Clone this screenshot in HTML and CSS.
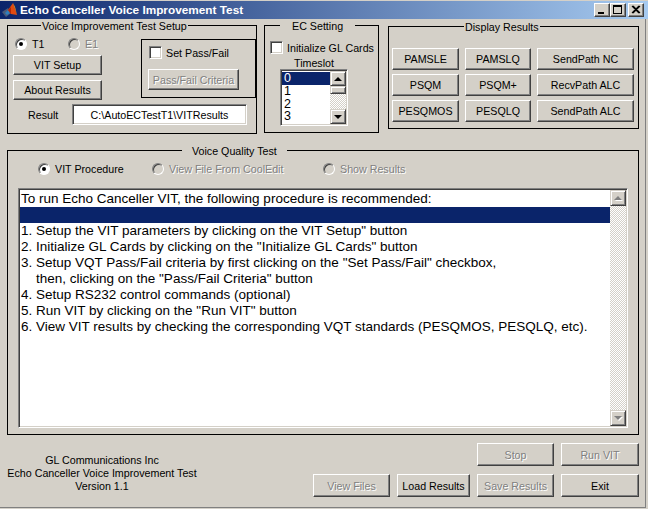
FILE: index.html
```html
<!DOCTYPE html>
<html>
<head>
<meta charset="utf-8">
<title>Echo Canceller Voice Improvement Test</title>
<link rel="stylesheet" href="styles.css">
</head>
<body>
<div class="window">
  <div class="titlebar">
    <svg class="app-icon" viewBox="0 0 16 16" width="16" height="16">
      <polygon points="0,10 6,6 9,11 4,15" fill="#4a5a7a"/>
      <polygon points="3,11 6,8 8,11 5,13" fill="#2e7fbf"/>
      <polygon points="6,8 11,1 15,13 9,12" fill="#e04a10"/>
      <polygon points="11,1 13,5 15,13" fill="#f6b820"/>
      <polygon points="6,8 9,5 9,12" fill="#b02808"/>
    </svg>
    <span class="title">Echo Canceller Voice Improvement Test</span>
    <div class="caption-buttons">
      <span class="cap-btn"><svg viewBox="0 0 14 12" width="14" height="12"><rect x="3" y="8" width="6" height="2" fill="#000"/></svg></span>
      <span class="cap-btn"><svg viewBox="0 0 14 12" width="14" height="12"><rect x="2.5" y="1.5" width="8" height="8" fill="none" stroke="#000"/><rect x="2" y="1" width="9" height="2" fill="#000"/></svg></span>
      <span class="cap-btn close"><svg viewBox="0 0 14 12" width="14" height="12"><path d="M3 2 L10 9 M4 2 L11 9 M10 2 L3 9 M11 2 L4 9" stroke="#000" stroke-width="1.1"/></svg></span>
    </div>
  </div>

  <div class="client">
    <div class="top-row">
      <fieldset class="panel setup">
        <legend class="lg-setup">Voice Improvement Test Setup</legend>
        <div class="setup-top">
          <div class="setup-left">
            <div class="radio-row">
              <span class="radio-item t1"><span class="radio checked"></span><span>T1</span></span>
              <span class="radio-item"><span class="radio off"></span><span class="dis-text">E1</span></span>
            </div>
            <button class="btn setup-btn">VIT Setup</button>
            <button class="btn setup-btn gap5">About Results</button>
          </div>
          <div class="passfail-box">
            <div class="check-row"><span class="checkbox"></span><span class="check-text">Set Pass/Fail</span></div>
            <button class="btn disabled pf-btn">Pass/Fail Criteria</button>
          </div>
        </div>
        <div class="result-row">
          <span class="result-label">Result</span>
          <div class="field">C:\AutoECTestT1\VITResults</div>
        </div>
      </fieldset>

      <fieldset class="panel ec">
        <legend class="lg-ec">EC Setting</legend>
        <div class="ec-check"><span class="checkbox"></span><span class="check-text">Initialize GL Cards</span></div>
        <div class="timeslot-label">Timeslot</div>
        <div class="listbox small-list">
          <div class="items">
            <div class="item sel">0</div>
            <div class="item">1</div>
            <div class="item">2</div>
            <div class="item">3</div>
          </div>
          <div class="scrollbar">
            <span class="sb-btn"><span class="arrow up"></span></span>
            <span class="sb-thumb"></span>
            <span class="sb-track"></span>
            <span class="sb-btn"><span class="arrow down"></span></span>
          </div>
        </div>
      </fieldset>

      <fieldset class="panel display">
        <legend class="lg-display">Display Results</legend>
        <div class="display-grid">
          <button class="btn">PAMSLE</button>
          <button class="btn">PAMSLQ</button>
          <button class="btn">SendPath NC</button>
          <button class="btn">PSQM</button>
          <button class="btn">PSQM+</button>
          <button class="btn">RecvPath ALC</button>
          <button class="btn">PESQMOS</button>
          <button class="btn">PESQLQ</button>
          <button class="btn">SendPath ALC</button>
        </div>
      </fieldset>
    </div>

    <fieldset class="panel vqt">
      <legend class="lg-vqt">Voice Quality Test</legend>
      <div class="vqt-radios">
        <span class="radio-item w1"><span class="radio checked"></span><span>VIT Procedure</span></span>
        <span class="radio-item w2"><span class="radio off"></span><span class="dis-text">View File From CoolEdit</span></span>
        <span class="radio-item"><span class="radio off"></span><span class="dis-text">Show Results</span></span>
      </div>
      <div class="listbox big-list">
        <div class="lines">
          <div class="line">To run Echo Canceller VIT, the following procedure is recommended:</div>
          <div class="line sel"> </div>
          <div class="line">1. Setup the VIT parameters by clicking on the VIT Setup" button</div>
          <div class="line">2. Initialize GL Cards by clicking on the "Initialize GL Cards" button</div>
          <div class="line">3. Setup VQT Pass/Fail criteria by first clicking on the "Set Pass/Fail" checkbox,</div>
          <div class="line">    then, clicking on the "Pass/Fail Criteria" button</div>
          <div class="line">4. Setup RS232 control commands (optional)</div>
          <div class="line">5. Run VIT by clicking on the "Run VIT" button</div>
          <div class="line">6. View VIT results by checking the corresponding VQT standards (PESQMOS, PESQLQ, etc).</div>
        </div>
        <div class="scrollbar big-sb">
          <span class="sb-btn"><span class="arrow up dis"></span></span>
          <span class="sb-track"></span>
          <span class="sb-btn"><span class="arrow down dis"></span></span>
        </div>
      </div>
    </fieldset>

    <div class="bottom">
      <div class="company">
        <div>GL Communications Inc</div>
        <div>Echo Canceller Voice Improvement Test</div>
        <div>Version 1.1</div>
      </div>
      <div class="bottom-buttons">
        <button class="btn disabled c3">Stop</button>
        <button class="btn disabled c4">Run VIT</button>
        <button class="btn disabled">View Files</button>
        <button class="btn">Load Results</button>
        <button class="btn disabled">Save Results</button>
        <button class="btn">Exit</button>
      </div>
    </div>
  </div>
</div>
</body>
</html>
```

FILE: styles.css
```css
* { box-sizing: border-box; }
html, body { margin: 0; padding: 0; }
body {
  width: 648px;
  height: 509px;
  overflow: hidden;
  background: #D4D0C8;
  font-family: "Liberation Sans", Arial, sans-serif;
  font-size: 10.7px;
  color: #000;
}
.window { width: 648px; height: 509px; background: #D4D0C8; }

/* title bar */
.titlebar {
  margin-top: 1px;
  height: 18px;
  background: linear-gradient(to right, #0A246A, #A6CAF0);
  display: flex;
  align-items: center;
  padding-left: 2px;
}
.app-icon { flex: none; }
.title {
  flex: 1;
  margin-left: 2px;
  color: #fff;
  font-weight: bold;
  font-size: 11.8px;
  white-space: nowrap;
}
.caption-buttons { display: flex; margin-right: 4px; }
.cap-btn {
  width: 16px;
  height: 14px;
  background: #D4D0C8;
  border: 1px solid;
  border-color: #fff #404040 #404040 #fff;
  box-shadow: inset -1px -1px #808080;
  display: flex;
  align-items: center;
  justify-content: center;
}
.cap-btn svg { display: block; }
.cap-btn.close { margin-left: 2px; }

/* client */
.client {
  width: 646px;
  height: 489px;
  padding-left: 7px;
  border-right: 1px solid #808080;
  border-bottom: 1px solid #808080;
}
.top-row { display: flex; align-items: flex-start; }

.panel {
  margin: 0;
  padding: 0;
  border: 1px solid #000;
  min-width: 0;
}
.panel > legend {
  padding: 2px 1px 0;
  line-height: 11px;
  font-size: 10.7px;
  white-space: nowrap;
}

/* generic controls */
.btn {
  font: inherit;
  color: #000;
  background: #D4D0C8;
  border: 1px solid;
  border-color: #fff #404040 #404040 #fff;
  box-shadow: inset -1px -1px #808080;
  padding: 0;
  margin: 0;
  display: flex;
  align-items: center;
  justify-content: center;
  white-space: nowrap;
}
.btn.disabled, .dis-text { color: #808080; text-shadow: 1px 1px 0 #fff; }

.radio-item { display: flex; align-items: center; white-space: nowrap; }
.radio {
  width: 12px;
  height: 12px;
  border-radius: 50%;
  background: #fff;
  border: 1px solid;
  border-color: #808080 #fff #fff #808080;
  box-shadow: inset 1px 1px #404040;
  margin-right: 5px;
  flex: none;
  display: flex;
  align-items: center;
  justify-content: center;
}
.radio.off { background: #D4D0C8; }
.radio.checked::after {
  content: "";
  width: 4px;
  height: 4px;
  border-radius: 50%;
  background: #000;
}
.checkbox {
  width: 13px;
  height: 13px;
  background: #fff;
  border: 1px solid;
  border-color: #808080 #fff #fff #808080;
  box-shadow: inset 1px 1px #404040, inset -1px -1px #D4D0C8;
  flex: none;
}
.check-text { margin-left: 4px; white-space: nowrap; }

.listbox {
  background: #fff;
  border: 1px solid;
  border-color: #808080 #fff #fff #808080;
  box-shadow: inset 1px 1px #404040, inset -1px -1px #D4D0C8;
  padding: 1px;
  display: flex;
}
.scrollbar { width: 16px; flex: none; display: flex; flex-direction: column; }
.sb-btn {
  height: 15px;
  flex: none;
  background: #D4D0C8;
  border: 1px solid;
  border-color: #D4D0C8 #404040 #404040 #D4D0C8;
  box-shadow: inset 1px 1px #fff, inset -1px -1px #808080;
  display: flex;
  align-items: center;
  justify-content: center;
}
.sb-thumb {
  height: 8px;
  flex: none;
  background: #D4D0C8;
  border: 1px solid;
  border-color: #D4D0C8 #404040 #404040 #D4D0C8;
  box-shadow: inset 1px 1px #fff, inset -1px -1px #808080;
}
.sb-track {
  flex: 1;
  background-color: #fff;
  background-image: repeating-conic-gradient(#D4D0C8 0 25%, #fff 0 50%);
  background-size: 2px 2px;
}
.arrow { width: 0; height: 0; border-left: 4px solid transparent; border-right: 4px solid transparent; }
.arrow.up { border-bottom: 4px solid #000; }
.arrow.down { border-top: 4px solid #000; }
.arrow.up.dis { border-bottom-color: #808080; filter: drop-shadow(1px 1px 0 #fff); }
.arrow.down.dis { border-top-color: #808080; filter: drop-shadow(1px 1px 0 #fff); }

/* panel 1 */
.setup { width: 250px; padding-top: 1px; padding-bottom: 8px; }
.lg-setup { margin-left: 33px; }
.setup-top { display: flex; align-items: flex-start; }
.setup-left { margin-left: 5px; width: 89px; display: flex; flex-direction: column; }
.radio-row { height: 22px; display: flex; align-items: center; padding-left: 2px; }
.radio-item.t1 { width: 53px; }
.setup-btn { height: 20px; width: 89px; }
.gap5 { margin-top: 5px; }
.passfail-box {
  margin-left: 39px;
  margin-top: 6px;
  width: 115px;
  height: 59px;
  border: 1px solid #000;
}
.check-row { display: flex; align-items: center; margin: 6px 0 0 7px; }
.pf-btn { width: 91px; height: 21px; margin: 10px 0 0 6px; }
.result-row { display: flex; align-items: center; margin-top: 4px; height: 21px; }
.result-label { width: 64px; padding-left: 20px; }
.field {
  width: 175px;
  height: 21px;
  background: #fff;
  border: 1px solid;
  border-color: #808080 #fff #fff #808080;
  box-shadow: inset 1px 1px #404040, inset -1px -1px #D4D0C8;
  display: flex;
  align-items: center;
  justify-content: center;
  white-space: nowrap;
}

/* panel 2 */
.ec { width: 115px; margin-left: 7px; padding-bottom: 6px; }
.lg-ec { margin-left: 15px; padding-left: 12px !important; padding-right: 12px !important; }
.ec-check { display: flex; align-items: center; margin: 9px 0 0 5px; }
.timeslot-label {
  margin: 4px 0 0 15px;
  width: 68px;
  height: 11px;
  line-height: 11px;
  text-align: center;
}
.small-list { margin-left: 15px; width: 68px; height: 57px; }
.small-list .items { flex: 1; padding-top: 1px; font-size: 12.5px; }
.small-list .item { height: 12.75px; line-height: 12.75px; padding-left: 2px; }
.item.sel, .line.sel { background: #0A246A; color: #fff; }

/* panel 3 */
.display { width: 251px; margin-left: 9px; margin-top: 1px; padding-bottom: 6px; }
.lg-display { margin-left: 75px; }
.display-grid {
  display: grid;
  grid-template-columns: 67px 66px 97px;
  grid-auto-rows: 22px;
  column-gap: 6px;
  row-gap: 4px;
  margin: 15px 0 0 3px;
}

/* voice quality test */
.vqt { width: 632px; margin-top: 10px; padding-bottom: 6px; }
.lg-vqt { margin-left: 174px; padding-left: 10px !important; padding-right: 10px !important; }
.vqt-radios { height: 23px; display: flex; align-items: center; padding-left: 30px; }
.radio-item.w1 { width: 114px; }
.radio-item.w2 { width: 171px; }
.big-list { margin: 8px 0 0 10px; width: 610px; height: 240px; }
.lines { flex: 1; font-size: 13.5px; padding-top: 1px; }
.line { height: 16px; line-height: 16px; white-space: pre; padding-left: 1px; }
.big-sb .sb-btn { height: 16px; }

/* bottom */
.bottom { display: flex; justify-content: space-between; width: 632px; margin-top: 8px; }
.company { width: 190px; text-align: center; line-height: 13px; margin-top: 11px; white-space: nowrap; }
.bottom-buttons {
  display: grid;
  grid-template-columns: 77px 73px 77px 78px;
  grid-auto-rows: 23px;
  column-gap: 7px;
  row-gap: 8px;
}
.c3 { grid-column: 3; }
.c4 { grid-column: 4; }
```
